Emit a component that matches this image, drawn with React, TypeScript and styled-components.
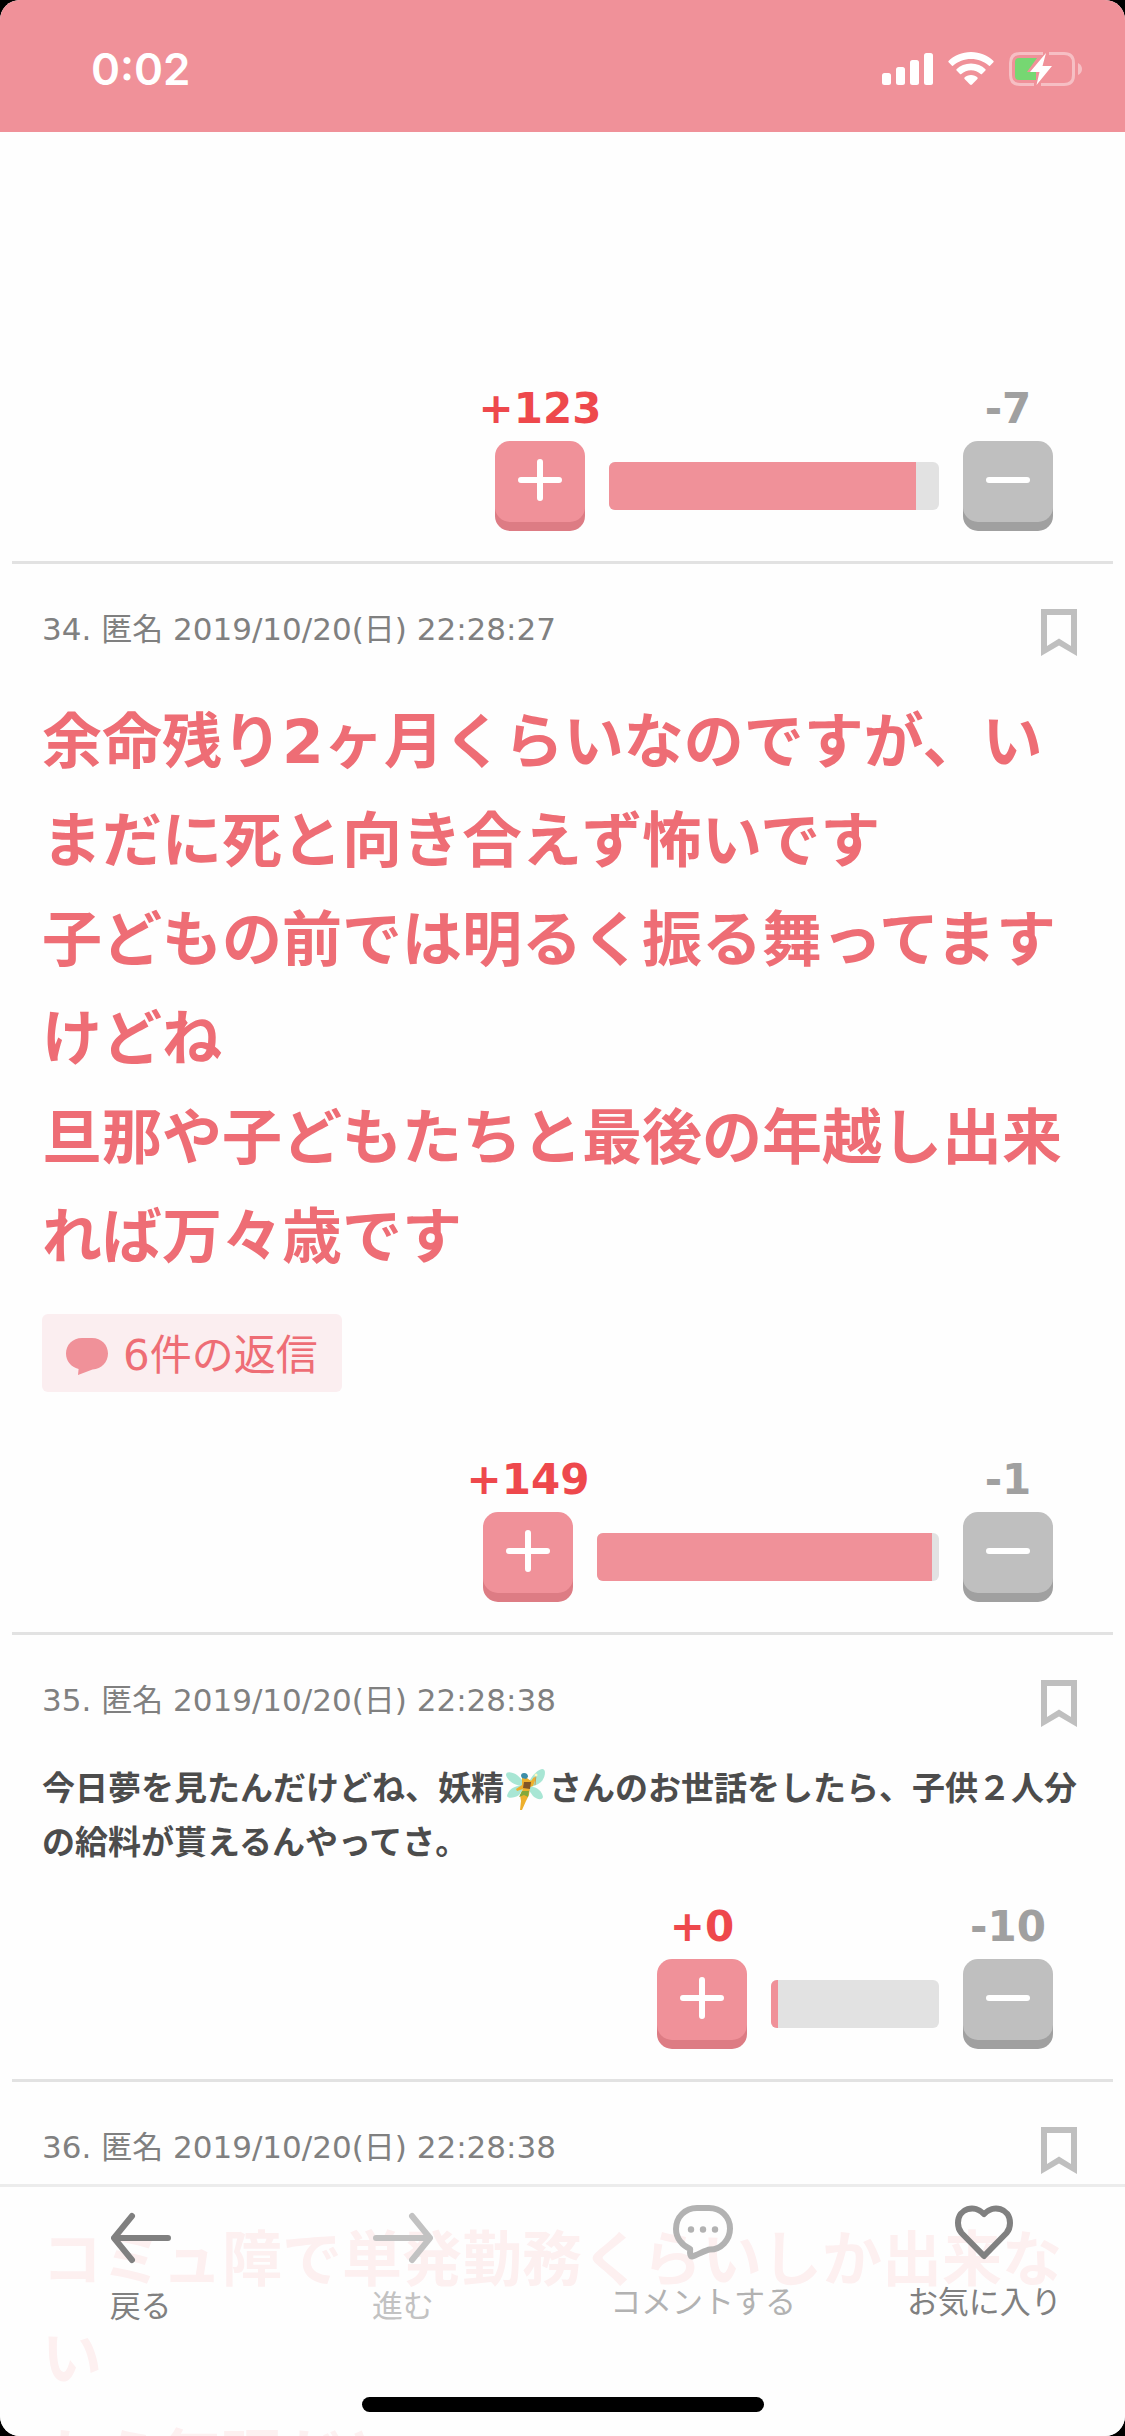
import React from "react";
import styled, { createGlobalStyle } from "styled-components";

const GlobalStyle = createGlobalStyle`
  * { box-sizing: border-box; }
  body {
    margin: 0;
    background: #000;
    font-family: "DejaVu Sans", "Noto Sans CJK JP", sans-serif;
  }
  button { font: inherit; border: 0; padding: 0; background: none; cursor: pointer; }
`;

const Screen = styled.div`
  position: relative;
  display: flex;
  flex-direction: column;
  height: 100vh;
  overflow: hidden;
  border-radius: 20px;
  background: #fefefe;
`;

const StatusBar = styled.header`
  display: flex;
  align-items: center;
  justify-content: space-between;
  flex: none;
  height: 132px;
  padding: 6px 43px 0 91px;
  background: #f09199;
`;

const Clock = styled.time`
  font: 600 44px/60px Inter, sans-serif;
  color: #fff;
`;

const StatusIcons = styled.div`
  display: flex;
  align-items: center;
  gap: 15px;
`;

const Feed = styled.main`
  flex: 1;
  min-height: 0;
  overflow: hidden;
  padding: 220px 12px 0;
`;

const Post = styled.article`
  border-bottom: 3px solid #e2e2e2;
  padding: 0 30px 30px;
`;

const PostHeader = styled.header`
  display: flex;
  align-items: flex-start;
  justify-content: space-between;
  padding: 45px 6px 35px 0;
`;

const Meta = styled.span`
  font-size: 31px;
  line-height: 40px;
  color: #808080;
`;

const BookmarkButton = styled.button`
  display: flex;
  color: #bfbfbf;
`;

const Body = styled.p<{ $featured?: boolean }>`
  margin: 0;
  padding-top: ${(p) => (p.$featured ? "2px" : "0")};
  white-space: pre-line;
  font-weight: 700;
  font-size: ${(p) => (p.$featured ? "60px" : "33px")};
  line-height: ${(p) => (p.$featured ? "99px" : "54px")};
  color: ${(p) => (p.$featured ? "#ee6d75" : "#4c4c4c")};
`;

const ReplyButton = styled.button`
  && {
    display: flex;
    align-items: center;
    gap: 15px;
    height: 78px;
    margin: 27px 0 31px;
    padding: 6px 24px 0;
    border-radius: 6px;
    background: #fbeef0;
    color: #ee6d75;
    font-size: 42px;
    line-height: 54px;
  }
`;

const Votes = styled.div`
  display: flex;
  justify-content: flex-end;
  align-items: flex-end;
  gap: 24px;
  padding: 36px 30px 0 0;
`;

const VoteColumn = styled.div`
  display: flex;
  flex-direction: column;
  align-items: center;
  gap: 11px;
  width: 90px;
`;

const Count = styled.span<{ $tone: "plus" | "minus" }>`
  font-size: 42px;
  line-height: 42px;
  font-weight: 700;
  white-space: nowrap;
  color: ${(p) => (p.$tone === "plus" ? "#ee484c" : "#a0a0a0")};
`;

const VoteButton = styled.button<{ $tone: "plus" | "minus" }>`
  && {
    display: flex;
    align-items: center;
    justify-content: center;
    width: 90px;
    height: 81px;
    margin-bottom: 9px;
    padding-bottom: 3px;
    border-radius: 15px;
    background: ${(p) => (p.$tone === "plus" ? "#f09199" : "#bfbfbf")};
    box-shadow: 0 9px 0 ${(p) => (p.$tone === "plus" ? "#dd7c84" : "#a0a0a0")};
  }
`;

const Meter = styled.div`
  height: 48px;
  margin-bottom: 21px;
  border-radius: 6px;
  overflow: hidden;
  background: #e2e2e2;
`;

const MeterFill = styled.div`
  height: 100%;
  background: #f09199;
`;

const Toolbar = styled.nav`
  position: absolute;
  left: 0;
  right: 0;
  bottom: 0;
  display: flex;
  flex-direction: column;
  align-items: center;
  justify-content: space-between;
  height: 252px;
  padding-bottom: 24px;
  border-top: 3px solid #ececec;
  background: rgba(254, 254, 254, 0.9);
`;

const Tabs = styled.div`
  display: grid;
  grid-template-columns: repeat(4, 1fr);
  width: 100%;
`;

const Tab = styled.button<{ $color: string; $nav?: boolean; $shift?: boolean }>`
  && {
    display: flex;
    flex-direction: column;
    align-items: center;
    gap: 18px;
    padding: ${(p) => (p.$nav ? "25px" : "18px")} ${(p) => (p.$shift ? "38px" : "0")} 0 0;
    font-size: 31px;
    line-height: 48px;
    color: ${(p) => p.$color};
  }
`;

const HomeIndicator = styled.div`
  width: 402px;
  height: 15px;
  border-radius: 8px;
  background: #000;
`;

const FairySvg = styled.svg`
  vertical-align: -11px;
`;

const Signal = () => (
  <svg width="51" height="34" viewBox="0 0 51 34" fill="#fff" aria-label="電波">
    <rect x="0" y="21" width="9" height="12" rx="2.5" />
    <rect x="14" y="15" width="9" height="18" rx="2.5" />
    <rect x="28" y="8" width="9" height="25" rx="2.5" />
    <rect x="42" y="1" width="9" height="32" rx="2.5" />
  </svg>
);

const Wifi = () => (
  <svg width="46" height="34" viewBox="0 0 46 34" fill="#fff" aria-label="Wi-Fi">
    <path d="M23 0C32 0 40 3.600 45.500 9Q46 9.700 45.400 10.300L42 13.700Q41.400 14.200 40.700 13.600C36 9.400 30 7 23 7C16 7 10 9.400 5.300 13.600Q4.600 14.200 4 13.700L.6 10.300Q0 9.700.5 9C6 3.600 14 0 23 0Z" />
    <path d="M23 11.500C28.800 11.500 33.800 13.700 37.500 17.200Q38 17.900 37.400 18.500L34 22Q33.400 22.500 32.700 22C30 19.700 26.800 18.300 23 18.300C19.200 18.300 16 19.700 13.300 22Q12.600 22.500 12 22L8.600 18.500Q8 17.900 8.500 17.200C12.200 13.700 17.200 11.500 23 11.500Z" />
    <path d="M23 23C25.700 23 28 24 29.500 25.500Q30 26.200 29.400 26.900L24 32.500Q23 33.400 22 32.500L16.600 26.900Q16 26.200 16.500 25.500C18 24 20.300 23 23 23Z" />
  </svg>
);

const Battery = () => (
  <svg width="73" height="34" viewBox="0 0 73 34" aria-label="充電中">
    <g fill="none" stroke="#fff" strokeOpacity=".42" strokeWidth="3">
      <path d="M34 1.500H11Q1.500 1.500 1.500 11V23Q1.500 32.500 11 32.500H25" />
      <path d="M40 1.500H55Q64.500 1.500 64.500 11V23Q64.500 32.500 55 32.500H32" />
    </g>
    <path d="M69 11Q73 13 73 17T69 23Z" fill="#fff" fillOpacity=".42" />
    <path d="M10 6H28L18 20H27V28H10Q6 28 6 24V10Q6 6 10 6Z" fill="#76d772" />
    <path d="M37 1L21 20H30.500L27.500 33L43 14H33.500Z" fill="#fff" />
  </svg>
);

const Bookmark = () => (
  <svg width="36" height="47" viewBox="0 0 36 47" aria-hidden="true">
    <path fillRule="evenodd" fill="currentColor" d="M0 0H36V47L18 36.500L0 47ZM6 6V37L18 29.500L30 37V6Z" />
  </svg>
);

const Bubble = () => (
  <svg width="42" height="37" viewBox="0 0 42 37" aria-hidden="true">
    <path fill="#f09199" d="M16 0H26C35.500 0 42 7 42 15.500S35.500 31 26.500 31.500L12 37L12.600 31C5 29 0 23 0 15.500C0 7 6.500 0 16 0Z" />
  </svg>
);

const Fairy = () => (
  <FairySvg width="45" height="44" viewBox="0 0 45 44" role="img" aria-label="妖精">
    <g fill="#a8e6d4">
      <path d="M19 19C11 19 3 13 2 8C2 4 8 5 13 8Q18 12 21 17Z" />
      <path d="M24 18C26 10 33 3 38 2C43 2 41 11 37 15Q31 20 24 20Z" />
      <path d="M19 19C11 18 4 23 3 29C4 32 11 31 15 28Q18 24 20 21Z" />
      <path d="M25 20C32 19 38 24 39 30C38 34 32 32 29 29Q26 25 24 22Z" />
    </g>
    <path d="M18 11L23 11L27 14L30 10L32 11L29 19L26 20L25 28L22 34L18 43L16 43L17 34L16 28L19 22L13 24L12 22L18 18Z" fill="#eeb02d" />
    <path d="M17 9Q17 6 20 6Q24 6 24 10L22 12L18 11Z" fill="#3d8ea8" />
    <path d="M20 15L27 15L26 22L19 21Z" fill="#805527" />
    <path d="M18 24H25L24 30L20 28L15 30Z" fill="#83a83c" />
    <path d="M31 18L32 8" stroke="#c79b52" strokeWidth="1" />
    <circle cx="32" cy="8" r="1.500" fill="#fff6bc" />
  </FairySvg>
);

const PlusIcon = () => (
  <svg width="44" height="44" viewBox="0 0 44 44" stroke="#fff" strokeWidth="6" strokeLinecap="round" aria-hidden="true">
    <path d="M3 22H41M22 4V40" />
  </svg>
);

const MinusIcon = () => (
  <svg width="44" height="44" viewBox="0 0 44 44" stroke="#fff" strokeWidth="6" strokeLinecap="round" aria-hidden="true">
    <path d="M3 22H41" />
  </svg>
);

const Arrow = ({ flip }: { flip?: boolean }) => (
  <svg width="60" height="52" viewBox="0 0 60 52" fill="none" stroke="currentColor" strokeWidth="6" strokeLinecap="round" strokeLinejoin="round" aria-hidden="true">
    <path d={flip ? "M3 26H56M39 4L57 26L39 48" : "M57 26H4M21 4L3 26L21 48"} />
  </svg>
);

const CommentIcon = () => (
  <svg width="60" height="55" viewBox="0 0 60 55" aria-hidden="true">
    <path d="M24 3H36C48 3 57 12 57 23.500S48 44.500 37 44.500C32 45 24 50.500 19 51.500Q16.500 51.500 17.200 44C9 40.500 3 33 3 24C3 12 12 3 24 3Z" fill="none" stroke="currentColor" strokeWidth="6" strokeLinejoin="round" />
    <g fill="currentColor">
      <circle cx="18" cy="24.500" r="3.200" />
      <circle cx="30" cy="24.500" r="3.200" />
      <circle cx="42" cy="24.500" r="3.200" />
    </g>
  </svg>
);

const Heart = () => (
  <svg width="58" height="55" viewBox="0 0 58 55" aria-hidden="true">
    <path d="M29 9C20 -1 3 3 3 18Q3 24 6.500 28L29 51L51.500 28Q55 24 55 18C55 3 38 -1 29 9Z" fill="none" stroke="currentColor" strokeWidth="6" strokeLinejoin="round" />
  </svg>
);

type VoteProps = { plus: number; minus: number; width: number; fill: number };

const VoteRow = ({ plus, minus, width, fill }: VoteProps) => (
  <Votes>
    <VoteColumn>
      <Count $tone="plus">+{plus}</Count>
      <VoteButton $tone="plus" aria-label="プラス"><PlusIcon /></VoteButton>
    </VoteColumn>
    <Meter style={{ width }}>
      <MeterFill style={{ width: `${fill}%` }} />
    </Meter>
    <VoteColumn>
      <Count $tone="minus">-{minus}</Count>
      <VoteButton $tone="minus" aria-label="マイナス"><MinusIcon /></VoteButton>
    </VoteColumn>
  </Votes>
);

const PostHead = ({ children }: { children: string }) => (
  <PostHeader>
    <Meta>{children}</Meta>
    <BookmarkButton aria-label="ブックマーク"><Bookmark /></BookmarkButton>
  </PostHeader>
);

export default function App() {
  return (
    <>
      <GlobalStyle />
      <Screen>
        <StatusBar>
          <Clock>0:02</Clock>
          <StatusIcons>
            <Signal />
            <Wifi />
            <Battery />
          </StatusIcons>
        </StatusBar>

        <Feed>
          <Post>
            <VoteRow plus={123} minus={7} width={330} fill={93} />
          </Post>

          <Post>
            <PostHead>34. 匿名 2019/10/20(日) 22:28:27</PostHead>
            <Body $featured>
              {"余命残り2ヶ月くらいなのですが、いまだに死と向き合えず怖いです\n子どもの前では明るく振る舞ってますけどね\n旦那や子どもたちと最後の年越し出来れば万々歳です"}
            </Body>
            <ReplyButton>
              <Bubble />
              6件の返信
            </ReplyButton>
            <VoteRow plus={149} minus={1} width={342} fill={98} />
          </Post>

          <Post>
            <PostHead>35. 匿名 2019/10/20(日) 22:28:38</PostHead>
            <Body>
              今日夢を見たんだけどね、妖精<Fairy />さんのお世話をしたら、子供２人分の給料が貰えるんやってさ。
            </Body>
            <VoteRow plus={0} minus={10} width={168} fill={4} />
          </Post>

          <Post>
            <PostHead>36. 匿名 2019/10/20(日) 22:28:38</PostHead>
            <Body $featured>{"コミュ障で単発勤務くらいしか出来ない\nから無理だと"}</Body>
          </Post>
        </Feed>

        <Toolbar>
          <Tabs>
            <Tab $color="#808080" $nav><Arrow />戻る</Tab>
            <Tab $color="#c2c2c2" $nav $shift><Arrow flip />進む</Tab>
            <Tab $color="#b2b2b2"><CommentIcon />コメントする</Tab>
            <Tab $color="#808080"><Heart />お気に入り</Tab>
          </Tabs>
          <HomeIndicator />
        </Toolbar>
      </Screen>
    </>
  );
}
